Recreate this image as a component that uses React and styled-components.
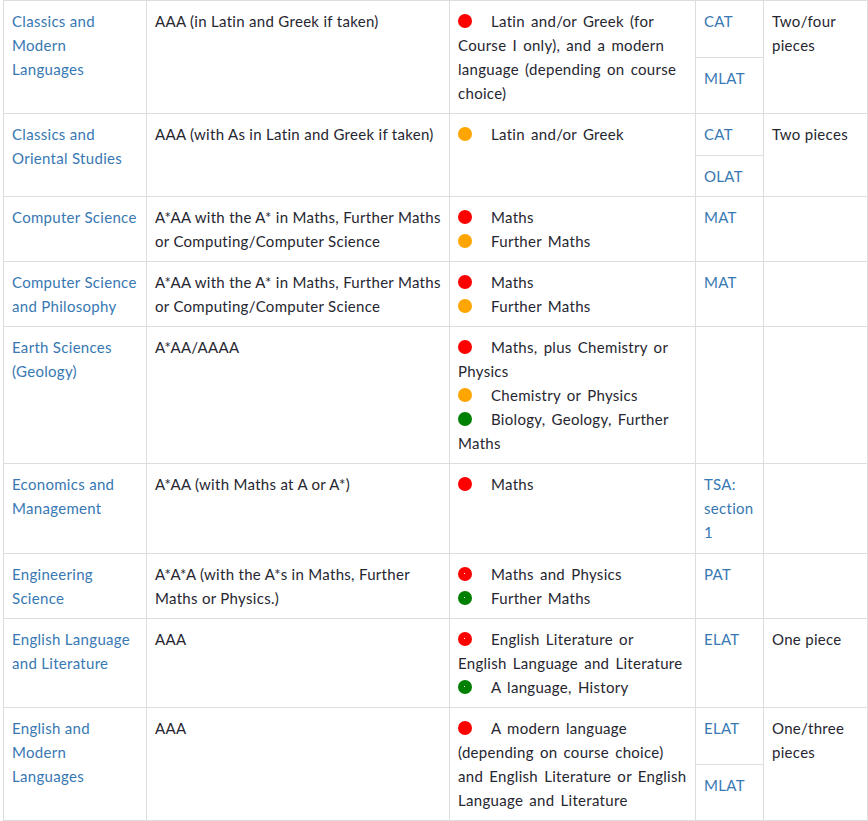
import styled, { createGlobalStyle } from "styled-components";

const GlobalStyle = createGlobalStyle`
  body {
    margin: 0;
    padding: 0 0 0 3px;
    background: #ffffff;
    font-family: "Lato", "Open Sans", sans-serif;
    font-size: 15px;
    letter-spacing: 0.3px;
    color: #262630;
  }
`;

const Table = styled.table`
  border-collapse: collapse;
  width: 864px;
  table-layout: fixed;
`;

const Cell = styled.td`
  border: 1px solid #dddddd;
  padding: 8px 8px ${(p) => (p.$extra ? "9px" : "8px")};
  vertical-align: top;
  line-height: 24px;
`;

const Link = styled.a`
  color: #3878b3;
  text-decoration: none;
`;

const Req = styled.div`
  display: block;
  word-spacing: 2px;
`;

const Dot = styled.span`
  display: inline-block;
  width: 14px;
  height: 14px;
  border-radius: 50%;
  margin-right: 19px;
  vertical-align: -1px;
  background: ${(p) =>
    p.$level === "essential"
      ? "#ff0000"
      : p.$level === "recommended"
      ? "#ffa500"
      : "#008000"};
  position: relative;
  &::after {
    content: "";
    display: ${(p) => (p.$pin ? "block" : "none")};
    position: absolute;
    left: 6px;
    top: 6px;
    width: 1px;
    height: 1px;
    background: #ffffff;
  }
`;

const rows = [
  {
    course: "Classics and Modern Languages",
    grades: "AAA (in Latin and Greek if taken)",
    reqs: [
      ["essential", "Latin and/or Greek (for Course I only), and a modern language (depending on course choice)"],
    ],
    tests: ["CAT", "MLAT"],
    work: "Two/four pieces",
  },
  {
    course: "Classics and Oriental Studies",
    grades: "AAA (with As in Latin and Greek if taken)",
    reqs: [["recommended", "Latin and/or Greek"]],
    tests: ["CAT", "OLAT"],
    work: "Two pieces",
  },
  {
    course: "Computer Science",
    grades: "A*AA with the A* in Maths, Further Maths or Computing/Computer Science",
    reqs: [
      ["essential", "Maths"],
      ["recommended", "Further Maths"],
    ],
    tests: ["MAT"],
    work: "",
  },
  {
    course: "Computer Science and Philosophy",
    grades: "A*AA with the A* in Maths, Further Maths or Computing/Computer Science",
    reqs: [
      ["essential", "Maths"],
      ["recommended", "Further Maths"],
    ],
    tests: ["MAT"],
    work: "",
  },
  {
    course: "Earth Sciences (Geology)",
    grades: "A*AA/AAAA",
    reqs: [
      ["essential", "Maths, plus Chemistry or Physics"],
      ["recommended", "Chemistry or Physics"],
      ["helpful", "Biology, Geology, Further Maths"],
    ],
    tests: [],
    work: "",
  },
  {
    course: "Economics and Management",
    grades: "A*AA (with Maths at A or A*)",
    reqs: [["essential", "Maths"]],
    tests: ["TSA: section 1"],
    work: "",
  },
  {
    course: "Engineering Science",
    grades: "A*A*A (with the A*s in Maths, Further Maths or Physics.)",
    pin: true,
    reqs: [
      ["essential", "Maths and Physics"],
      ["helpful", "Further Maths"],
    ],
    tests: ["PAT"],
    work: "",
  },
  {
    course: "English Language and Literature",
    grades: "AAA",
    pin: true,
    reqs: [
      ["essential", "English Literature or English Language and Literature"],
      ["helpful", "A language, History"],
    ],
    tests: ["ELAT"],
    work: "One piece",
  },
  {
    course: "English and Modern Languages",
    grades: "AAA",
    reqs: [
      ["essential", "A modern language (depending on course choice) and English Literature or English Language and Literature"],
    ],
    tests: ["ELAT", "MLAT"],
    work: "One/three pieces",
  },
];

function Requirements({ reqs, pin }) {
  return reqs.map(([level, text], i) => (
    <Req key={i}>
      <Dot $level={level} $pin={pin} />
      {text}
    </Req>
  ));
}

function CourseRow({ row }) {
  const span = row.tests.length > 1 ? row.tests.length : 1;
  const first = (
    <tr>
      <Cell rowSpan={span}>
        <Link href="#">{row.course}</Link>
      </Cell>
      <Cell rowSpan={span}>{row.grades}</Cell>
      <Cell rowSpan={span}>
        <Requirements reqs={row.reqs} pin={row.pin} />
      </Cell>
      <Cell $extra>{row.tests[0] && <Link href="#">{row.tests[0]}</Link>}</Cell>
      <Cell rowSpan={span}>{row.work}</Cell>
    </tr>
  );
  const rest = row.tests.slice(1).map((t) => (
    <tr key={t}>
      <Cell>
        <Link href="#">{t}</Link>
      </Cell>
    </tr>
  ));
  return (
    <>
      {first}
      {rest}
    </>
  );
}

export default function App() {
  return (
    <>
      <GlobalStyle />
      <Table>
        <colgroup>
          <col style={{ width: 143 }} />
          <col style={{ width: 303 }} />
          <col style={{ width: 246 }} />
          <col style={{ width: 68 }} />
          <col style={{ width: 104 }} />
        </colgroup>
        <tbody>
          {rows.map((r) => (
            <CourseRow key={r.course} row={r} />
          ))}
        </tbody>
      </Table>
    </>
  );
}
